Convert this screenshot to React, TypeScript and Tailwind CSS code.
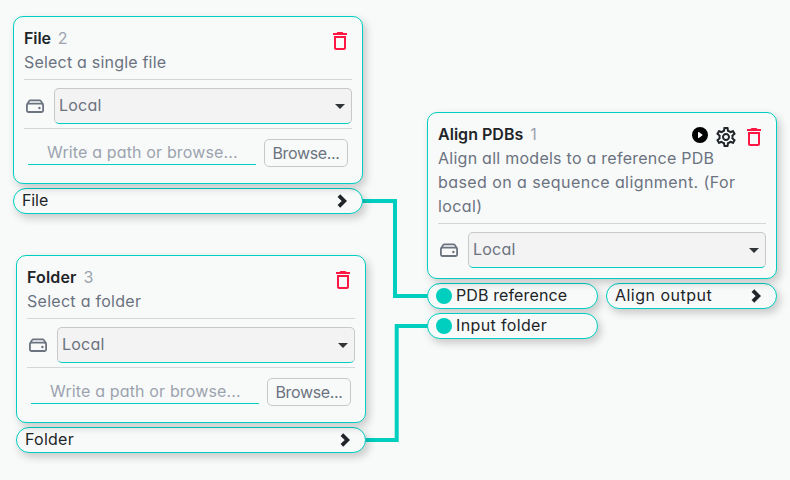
import React from "react";
import { MdDeleteOutline, MdOutlineSettings } from "react-icons/md";
import { BsPlayCircleFill } from "react-icons/bs";

const shadow = "shadow-[3px_4px_8px_rgba(0,0,0,0.2)]";

function Port({ label, input, text }: { label: string; input?: boolean; text: string }) {
  return (
    <div className={`flex h-[26px] items-center rounded-full border border-[#00cfc0] bg-[#f8faf9] text-[#212529] ${shadow} ${input ? "pl-2" : "pl-2 pr-[15px]"}`}>
      {input && <span className="mr-1 size-4 rounded-full bg-[#00cfc0]" />}
      <span className={`mb-px whitespace-nowrap leading-[23px] ${text}`}>{label}</span>
      {!input && (
        <svg className="ml-auto h-[14px] w-[10px]" viewBox="0 0 10 14" fill="none" stroke="#212529" strokeWidth="3.8">
          <path d="M1.9 1.6 7.3 7l-5.4 5.4" />
        </svg>
      )}
    </div>
  );
}

function DriveIcon() {
  return (
    <svg className="ml-[2px] h-[14px] w-[18px] shrink-0" viewBox="0 0 18 14" fill="none" stroke="#6b7280" strokeWidth="1.8" strokeLinejoin="round">
      <rect x="0.9" y="4.7" width="16.2" height="8.3" rx="1.4" />
      <path d="M1.2 5.4 3 2.1Q3.4 1.3 4.4 1.3h9.2q1 0 1.4.8l1.8 3.3" />
      <circle cx="13.4" cy="9" r="1.2" fill="#6b7280" stroke="none" />
    </svg>
  );
}

function LocationSelect() {
  return (
    <div className="mt-2 flex items-center">
      <DriveIcon />
      <div className="ml-[10px] flex h-9 flex-1 items-center justify-between rounded-[5px] border border-[#c6c8ca] border-b-[#00cfc0] bg-[#f3f3f3] pl-1 pr-[6px] text-[#6b7280]">
        <span className="mb-px leading-[23px] tracking-[0.2px]">Local</span>
        <svg className="h-[5px] w-[10px]" viewBox="0 0 10 5" fill="#303436"><path d="M0 0h10L5 5z" /></svg>
      </div>
    </div>
  );
}

function PathRow() {
  return (
    <div className="mt-1 flex h-[46px] items-start border-t border-[#d4d7d8] pt-[10px]">
      <div className="ml-1 h-[26px] w-[228px] border-b border-[#00cfc0] pl-[19px] leading-[27px] text-[#9ca3af]">
        <span className="whitespace-nowrap tracking-[0.15px]">Write a path or browse...</span>
      </div>
      <div className="ml-2 flex h-7 w-[84px] items-center justify-center rounded-[5px] border border-[#c6c8ca] text-[#6b7280]">
        <span className="tracking-[-0.35px]">Browse...</span>
      </div>
    </div>
  );
}

type CardProps = {
  title: string;
  id: number;
  titleText: string;
  description: { text: string; spacing: string }[];
  height: string;
  actions?: boolean;
  path?: boolean;
};

function Card({ title, id, titleText, description, height, actions, path }: CardProps) {
  return (
    <div className={`relative rounded-[10px] border border-[#00cfc0] bg-[#f8faf9] px-[10px] pt-[9px] ${shadow} ${height}`}>
      <div className="flex h-6 leading-6">
        <span className={`whitespace-nowrap font-semibold text-[#212529] ${titleText}`}>{title}</span>
        <span className="ml-[7px] text-[#9ca3af]">{id}</span>
      </div>
      <div className="absolute top-3 right-[10px] flex">
        {actions && <BsPlayCircleFill className="mt-[2px] mr-[6px] size-4 text-black" />}
        {actions && <MdOutlineSettings className="mr-1 size-6 text-[#212529]" />}
        <MdDeleteOutline className="size-6 text-[#ff1744]" />
      </div>
      <div className="text-[#6b7280]">
        {description.map((line) => (
          <div key={line.text} className={`h-6 whitespace-nowrap leading-6 ${line.spacing}`}>{line.text}</div>
        ))}
      </div>
      <div className="mt-[5px] h-px bg-[#d4d7d8]" />
      <LocationSelect />
      {path && <PathRow />}
    </div>
  );
}

export default function App() {
  return (
    <main className="relative h-[480px] w-[790px] overflow-hidden bg-[#f8faf9] font-['Inter','Noto_Sans',sans-serif] text-base [font-feature-settings:'cv11']">
      <svg className="absolute inset-0 h-full w-full" fill="none" stroke="#00cfc0" strokeWidth="4">
        <path d="M360 201H395V296H430" />
        <path d="M360 440H396.7V326H430" />
      </svg>
      <section className="absolute top-4 left-[13px] w-[350px]">
        <Card title="File" id={2} titleText="tracking-[-0.1px]" description={[{ text: "Select a single file", spacing: "tracking-[0.2px]" }]} height="h-[168px]" path />
        <div className="mt-1"><Port label="File" text="tracking-[-0.1px]" /></div>
      </section>
      <section className="absolute top-[255px] left-4 w-[350px]">
        <Card title="Folder" id={3} titleText="tracking-[0.15px]" description={[{ text: "Select a folder", spacing: "tracking-[0.28px]" }]} height="h-[168px]" path />
        <div className="mt-1"><Port label="Folder" text="tracking-[0.25px]" /></div>
      </section>
      <section className="absolute top-28 left-[427px] w-[350px]">
        <Card
          title="Align PDBs"
          id={1}
          titleText="tracking-[0.03px]"
          description={[
            { text: "Align all models to a reference PDB", spacing: "tracking-[0.26px]" },
            { text: "based on a sequence alignment. (For", spacing: "tracking-[0.43px]" },
            { text: "local)", spacing: "tracking-[0.4px]" },
          ]}
          height="h-[167px]"
          actions
        />
        <div className="mt-1 grid grid-cols-2 gap-x-2 gap-y-1">
          <Port label="PDB reference" input text="tracking-[0.12px]" />
          <Port label="Align output" text="tracking-[0.48px]" />
          <Port label="Input folder" input text="tracking-[0.36px]" />
        </div>
      </section>
    </main>
  );
}
